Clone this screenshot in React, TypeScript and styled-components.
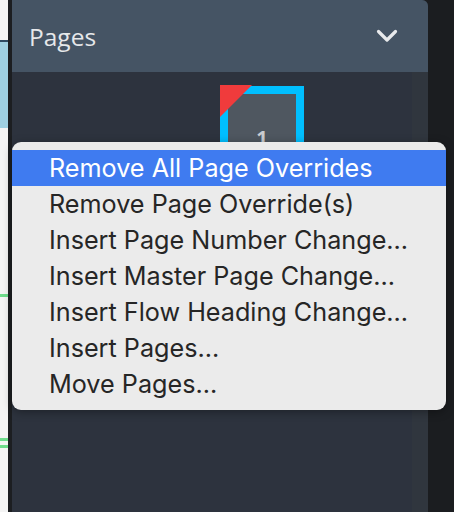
import styled, { createGlobalStyle } from 'styled-components';

const GlobalStyle = createGlobalStyle`
  html, body {
    margin: 0;
    padding: 0;
    width: 454px;
    height: 512px;
    overflow: hidden;
    background: #1b1d20;
  }
`;

const menuItems = [
  'Remove All Page Overrides',
  'Remove Page Override(s)',
  'Insert Page Number Change...',
  'Insert Master Page Change...',
  'Insert Flow Heading Change...',
  'Insert Pages...',
  'Move Pages...',
];

function App() {
  return (
    <>
      <GlobalStyle />
      <Screen>
        <Canvas>
          <CanvasRule />
          <CanvasBlock />
          <CanvasGap $h={166} />
          <GreenLine />
          <CanvasGap $h={141} />
          <GreenLine />
          <CanvasGap $h={4} />
          <GreenLine />
        </Canvas>
        <Divider />
        <Panel>
          <Header>
            <Title>Pages</Title>
            <svg width="22" height="14" viewBox="0 0 22 14">
              <path d="M2.5 2.5 L11 11 L19.5 2.5" fill="none" stroke="#e8eaec" strokeWidth="3.2" strokeLinecap="round" strokeLinejoin="round" />
            </svg>
          </Header>
          <Body>
            <Thumb>
              <ThumbNumber>1</ThumbNumber>
              <Corner />
            </Thumb>
            <Menu>
              {menuItems.map((item, i) => (
                <MenuItem key={item} $active={i === 0}>{item}</MenuItem>
              ))}
            </Menu>
          </Body>
        </Panel>
      </Screen>
    </>
  );
}

export default App;

const Screen = styled.div`
  display: flex;
  width: 454px;
  height: 512px;
  background: #1b1d20;
`;

const Canvas = styled.div`
  width: 8px;
  background: #f4f4f4;
  display: flex;
  flex-direction: column;
`;

const CanvasRule = styled.div`
  margin-top: 40px;
  height: 2px;
  background: #2f4a62;
`;

const CanvasBlock = styled.div`
  height: 86px;
  background: #9fd0e2;
`;

const CanvasGap = styled.div<{ $h: number }>`
  height: ${(p) => p.$h}px;
`;

const GreenLine = styled.div`
  height: 3px;
  background: #6fdc8c;
`;

const Divider = styled.div`
  width: 4px;
  background: #1c1e21;
`;

const Panel = styled.div`
  width: 416px;
  display: flex;
  flex-direction: column;
  background: #2d333e;
  border-top-right-radius: 6px;
`;

const Header = styled.div`
  height: 72px;
  background: #455464;
  border-top-right-radius: 6px;
  display: flex;
  align-items: center;
  justify-content: space-between;
  padding: 0 30px 0 17px;
`;

const Title = styled.span`
  font-family: 'Open Sans', 'Liberation Sans', sans-serif;
  font-size: 24.5px;
  color: #e6e8ea;
  margin-top: 0;
`;

const Body = styled.div`
  flex: 1;
  position: relative;
  background: linear-gradient(to right, #2d333e 0, #2d333e 400px, #30363e 400px);
`;

const Thumb = styled.div`
  position: absolute;
  left: 208px;
  top: 14px;
  width: 68px;
  height: 70px;
  border: 8px solid #00bfff;
  background: #4f5760;
  display: flex;
  justify-content: center;
  align-items: flex-start;
  padding-top: 34px;
  box-sizing: content-box;
`;

const Corner = styled.div`
  position: absolute;
  left: -8px;
  top: -9px;
  width: 0;
  height: 0;
  border-top: 32px solid #f03b3c;
  border-right: 32px solid transparent;
`;

const ThumbNumber = styled.span`
  font-family: 'Open Sans', 'Liberation Sans', sans-serif;
  font-weight: 700;
  font-size: 20px;
  line-height: 1;
  color: #c9ccd0;
`;

const Menu = styled.div`
  position: absolute;
  left: 0;
  top: 70px;
  width: 434px;
  padding: 8px 0;
  background: #ebebeb;
  border-radius: 9px;
  box-shadow: 0 2px 10px rgba(0, 0, 0, 0.35);
  display: flex;
  flex-direction: column;
`;

const MenuItem = styled.div<{ $active: boolean }>`
  height: 36px;
  display: flex;
  align-items: center;
  padding-left: 37px;
  font-family: Inter, 'Liberation Sans', sans-serif;
  font-size: 25.2px;
  color: ${(p) => (p.$active ? '#ffffff' : '#262626')};
  background: ${(p) => (p.$active ? '#3f7bf0' : 'transparent')};
`;
